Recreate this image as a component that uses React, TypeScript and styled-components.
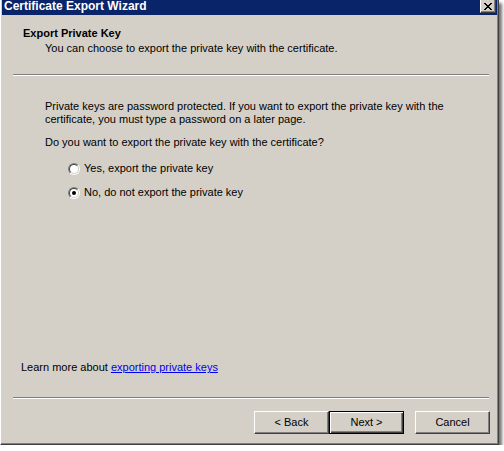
import styled, { createGlobalStyle } from 'styled-components';

const GlobalStyle = createGlobalStyle`
  body {
    margin: 0;
    background: #fff;
  }
`;

// pixel rows of the classic caption "X" glyph
const CLOSE_GLYPH = ['XX....XX', '.XX..XX.', '..XXXX..', '...XX...', '..XXXX..', '.XX..XX.', 'XX....XX'];

const Window = styled.div`
  box-sizing: border-box;
  width: 499px;
  height: 445px;
  display: flex;
  flex-direction: column;
  background: #d4d0c8;
  border-left: 1px solid #fff;
  border-right: 1px solid #404040;
  border-bottom: 1px solid #404040;
  box-shadow: inset -1px -1px 0 #808080, 3px 3px 3px rgba(0, 0, 0, 0.55);
  font-family: 'Liberation Sans', Arial, sans-serif;
  font-size: 11px;
  line-height: 13px;
  color: #000;
`;

const TitleBar = styled.div`
  height: 15px;
  margin: 0 1px;
  padding-left: 2px;
  display: flex;
  align-items: flex-start;
  background: #0a246a;
  color: #fff;
`;

const Title = styled.span`
  font-weight: bold;
  font-size: 12px;
  line-height: 13px;
`;

const CloseButton = styled.button`
  box-sizing: border-box;
  width: 16px;
  height: 13px;
  margin: 0 1px 0 auto;
  padding: 0 0 2px;
  display: flex;
  align-items: flex-end;
  justify-content: center;
  background: #d4d0c8;
  border: 1px solid;
  border-top: none;
  border-color: #fff #404040 #404040 #fff;
  box-shadow: inset -1px -1px 0 #808080;
`;

const Body = styled.div`
  flex: 1;
  display: flex;
  flex-direction: column;
  padding-bottom: 10px;
`;

const Header = styled.div`
  padding: 12px 0 0 22px;
`;

const HeaderTitle = styled.div`
  font-weight: bold;
`;

const HeaderSubtitle = styled.div`
  margin: 2px 0 0 22px;
`;

const Rule = styled.hr<{ $gap: number }>`
  box-sizing: border-box;
  width: 476px;
  height: 2px;
  margin: ${p => p.$gap}px 0 0 12px;
  border: none;
  border-top: 1px solid #808080;
  border-bottom: 1px solid #fff;
`;

const Content = styled.div`
  padding: 24px 0 0 44px;
`;

const Paragraph = styled.p<{ $gap?: number }>`
  margin: ${p => p.$gap ?? 0}px 0 0;
`;

const Options = styled.div`
  margin: 13px 0 0 23px;
  display: flex;
  flex-direction: column;
  gap: 11px;
`;

const Option = styled.label`
  display: flex;
  align-items: center;
  gap: 4px;
  height: 13px;
`;

const RadioMark = styled.span<{ $checked?: boolean }>`
  box-sizing: border-box;
  position: relative;
  width: 12px;
  height: 12px;
  border-radius: 50%;
  border: 1px solid;
  border-color: #808080 #fff #fff #808080;

  &::before {
    content: '';
    position: absolute;
    inset: 0;
    box-sizing: border-box;
    border-radius: 50%;
    border: 1px solid;
    border-color: #404040 #d4d0c8 #d4d0c8 #404040;
    background: #fff;
  }

  &::after {
    content: '';
    display: ${p => (p.$checked ? 'block' : 'none')};
    position: absolute;
    left: 3px;
    top: 3px;
    width: 4px;
    height: 4px;
    border-radius: 50%;
    background: #000;
  }
`;

const Spacer = styled.div`
  flex: 1;
`;

const LearnMore = styled.div`
  padding-left: 20px;
`;

const Link = styled.a`
  color: #0000ee;
  text-decoration: underline;
  cursor: pointer;
`;

const ButtonRow = styled.div`
  margin-top: 12px;
  padding-right: 8px;
  display: flex;
  justify-content: flex-end;
`;

const Button = styled.button<{ $default?: boolean; $gap?: number }>`
  box-sizing: border-box;
  width: 75px;
  height: 23px;
  margin-left: ${p => p.$gap ?? 0}px;
  padding: 0;
  font: inherit;
  color: #000;
  background: #d4d0c8;
  border: 1px solid;
  border-color: ${p => (p.$default ? '#000' : '#fff #404040 #404040 #fff')};
  box-shadow: ${p =>
    p.$default
      ? 'inset 1px 1px 0 #fff, inset -1px -1px 0 #404040, inset -2px -2px 0 #808080'
      : 'inset -1px -1px 0 #808080'};
`;

const CloseGlyph = () => (
  <svg width='8' height='7' viewBox='0 0 8 7' shapeRendering='crispEdges'>
    {CLOSE_GLYPH.flatMap((row, y) =>
      row.split('').map((c, x) => (c === 'X' ? <rect key={`${x}-${y}`} x={x} y={y} width='1' height='1' fill='#000' /> : null))
    )}
  </svg>
);

const App = () => (
  <>
    <GlobalStyle />
    <Window>
      <TitleBar>
        <Title>Certificate Export Wizard</Title>
        <CloseButton aria-label='Close'>
          <CloseGlyph />
        </CloseButton>
      </TitleBar>
      <Body>
        <Header>
          <HeaderTitle>Export Private Key</HeaderTitle>
          <HeaderSubtitle>You can choose to export the private key with the certificate.</HeaderSubtitle>
        </Header>
        <Rule $gap={19} />
        <Content>
          <Paragraph>
            Private keys are password protected. If you want to export the private key with the
            <br />
            certificate, you must type a password on a later page.
          </Paragraph>
          <Paragraph $gap={10}>Do you want to export the private key with the certificate?</Paragraph>
          <Options>
            <Option>
              <RadioMark />
              Yes, export the private key
            </Option>
            <Option>
              <RadioMark $checked />
              No, do not export the private key
            </Option>
          </Options>
        </Content>
        <Spacer />
        <LearnMore>
          Learn more about <Link>exporting private keys</Link>
        </LearnMore>
        <Rule $gap={23} />
        <ButtonRow>
          <Button>&lt; Back</Button>
          <Button $default>Next &gt;</Button>
          <Button $gap={11}>Cancel</Button>
        </ButtonRow>
      </Body>
    </Window>
  </>
);

export default App;
